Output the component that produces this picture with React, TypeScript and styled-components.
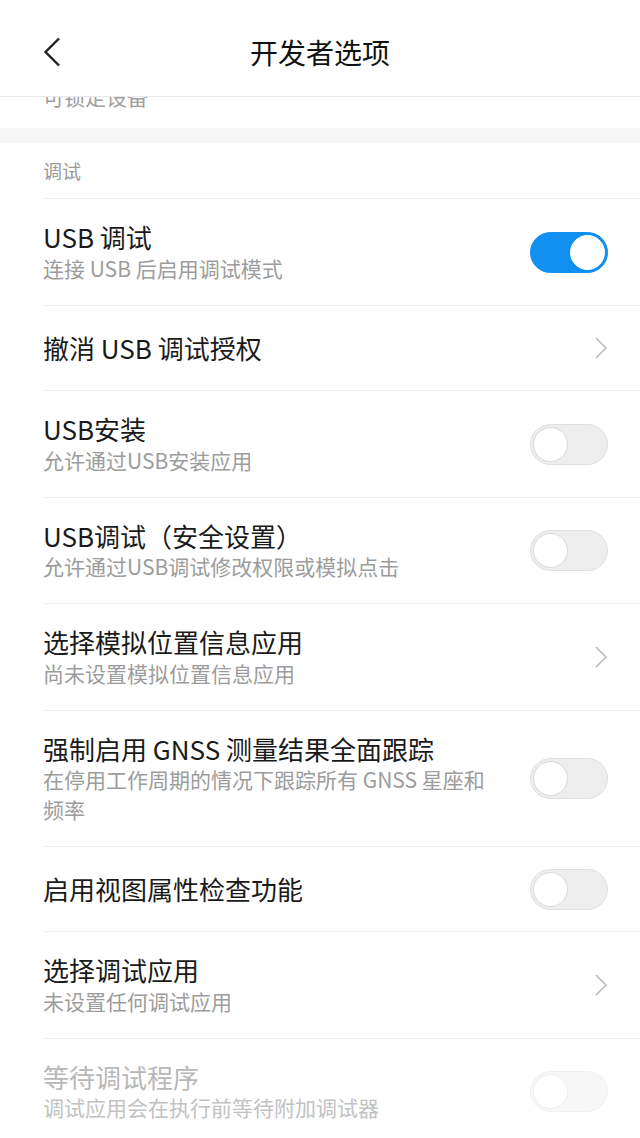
import React from 'react';
import styled, { createGlobalStyle } from 'styled-components';

const GlobalStyle = createGlobalStyle`
  html, body {
    margin: 0;
    padding: 0;
    background: #fff;
    overflow: hidden;
  }
  body {
    font-family: "Noto Sans CJK SC", "Noto Sans", sans-serif;
  }
`;

const Page = styled.div`
  width: 640px;
  background: #fff;
`;

const Header = styled.div`
  height: 97px;
  display: grid;
  grid-template-columns: 120px 1fr 120px;
  align-items: center;
  padding: 8px 0 0 43px;
  box-sizing: border-box;
  border-bottom: 1px solid #e8e8e8;
`;

const BackButton = styled.div`
  display: flex;
  align-items: center;
  height: 30px;
`;

const Title = styled.h1`
  margin: 0 0 0 -43px;
  text-align: center;
  font-size: 28px;
  font-weight: 400;
  color: #111;
  line-height: 40px;
`;

const ClippedRow = styled.div`
  height: 31px;
  overflow: hidden;
  padding-left: 43px;
`;

const ClippedText = styled.div`
  margin-top: -16px;
  font-size: 21px;
  line-height: 30px;
  color: #a0a0a0;
`;

const Band = styled.div`
  height: 15px;
  background: #f6f6f6;
`;

const SectionLabel = styled.div`
  height: 55px;
  display: flex;
  align-items: center;
  padding-left: 43px;
  font-size: 19px;
  color: #9a9a9a;
`;

const List = styled.div`
  padding-left: 43px;
`;

const Row = styled.div`
  display: flex;
  align-items: center;
  gap: 28px;
  min-height: 85.5px;
  box-sizing: border-box;
  padding: 22px 32px 21.5px 0;
  border-top: 1px solid #ececec;
`;

const TextBlock = styled.div`
  flex: 1;
  min-width: 0;
`;

const RowTitle = styled.div<{ $disabled?: boolean }>`
  font-size: 26px;
  line-height: 32.5px;
  color: ${(p) => (p.$disabled ? '#b8b8b8' : '#1a1a1a')};
`;

const RowSub = styled.div<{ $disabled?: boolean }>`
  font-size: 21px;
  line-height: 29.5px;
  color: ${(p) => (p.$disabled ? '#c2c2c2' : '#9c9c9c')};
`;

const Track = styled.div<{ $on?: boolean; $disabled?: boolean }>`
  position: relative;
  flex: none;
  width: 78px;
  height: 41px;
  box-sizing: border-box;
  border-radius: 21px;
  background: ${(p) => (p.$on ? '#1190f2' : '#eeeeee')};
  border: 1px solid ${(p) => (p.$on ? '#1190f2' : '#e0e0e0')};
  opacity: ${(p) => (p.$disabled ? 0.45 : 1)};
`;

const Knob = styled.div<{ $on?: boolean }>`
  position: absolute;
  top: 2px;
  ${(p) => (p.$on ? 'right: 2px;' : 'left: 2px;')}
  width: 35px;
  height: 35px;
  box-sizing: border-box;
  border-radius: 50%;
  background: #fff;
  border: 1px solid ${(p) => (p.$on ? '#fff' : '#d8d8d8')};
`;

const Chevron = styled.svg`
  flex: none;
  width: 12px;
  height: 22px;
  margin-right: 1px;
`;

type Item = {
  title: string;
  sub?: string;
  kind: 'toggle' | 'link';
  on?: boolean;
  disabled?: boolean;
};

const items: Item[] = [
  { title: 'USB 调试', sub: '连接 USB 后启用调试模式', kind: 'toggle', on: true },
  { title: '撤消 USB 调试授权', kind: 'link' },
  { title: 'USB安装', sub: '允许通过USB安装应用', kind: 'toggle' },
  { title: 'USB调试（安全设置）', sub: '允许通过USB调试修改权限或模拟点击', kind: 'toggle' },
  { title: '选择模拟位置信息应用', sub: '尚未设置模拟位置信息应用', kind: 'link' },
  {
    title: '强制启用 GNSS 测量结果全面跟踪',
    sub: '在停用工作周期的情况下跟踪所有 GNSS 星座和频率',
    kind: 'toggle',
  },
  { title: '启用视图属性检查功能', kind: 'toggle' },
  { title: '选择调试应用', sub: '未设置任何调试应用', kind: 'link' },
  { title: '等待调试程序', sub: '调试应用会在执行前等待附加调试器', kind: 'toggle', disabled: true },
];

const Toggle = ({ on, disabled }: { on?: boolean; disabled?: boolean }) => (
  <Track $on={on} $disabled={disabled}>
    <Knob $on={on} />
  </Track>
);

const App = () => {
  return (
    <Page>
      <GlobalStyle />
      <Header>
        <BackButton>
          <svg width="18" height="30" viewBox="0 0 18 30">
            <polyline points="16,1.5 2.5,15 16,28.5" fill="none" stroke="#222" strokeWidth="2.4" />
          </svg>
        </BackButton>
        <Title>开发者选项</Title>
        <div />
      </Header>
      <ClippedRow>
        <ClippedText>可锁定设备</ClippedText>
      </ClippedRow>
      <Band />
      <SectionLabel>调试</SectionLabel>
      <List>
        {items.map((item) => (
          <Row key={item.title}>
            <TextBlock>
              <RowTitle $disabled={item.disabled}>{item.title}</RowTitle>
              {item.sub && <RowSub $disabled={item.disabled}>{item.sub}</RowSub>}
            </TextBlock>
            {item.kind === 'toggle' ? (
              <Toggle on={item.on} disabled={item.disabled} />
            ) : (
              <Chevron viewBox="0 0 12 22">
                <polyline points="1,1 11,11 1,21" fill="none" stroke="#b8b8b8" strokeWidth="1.5" />
              </Chevron>
            )}
          </Row>
        ))}
      </List>
    </Page>
  );
};

export default App;
